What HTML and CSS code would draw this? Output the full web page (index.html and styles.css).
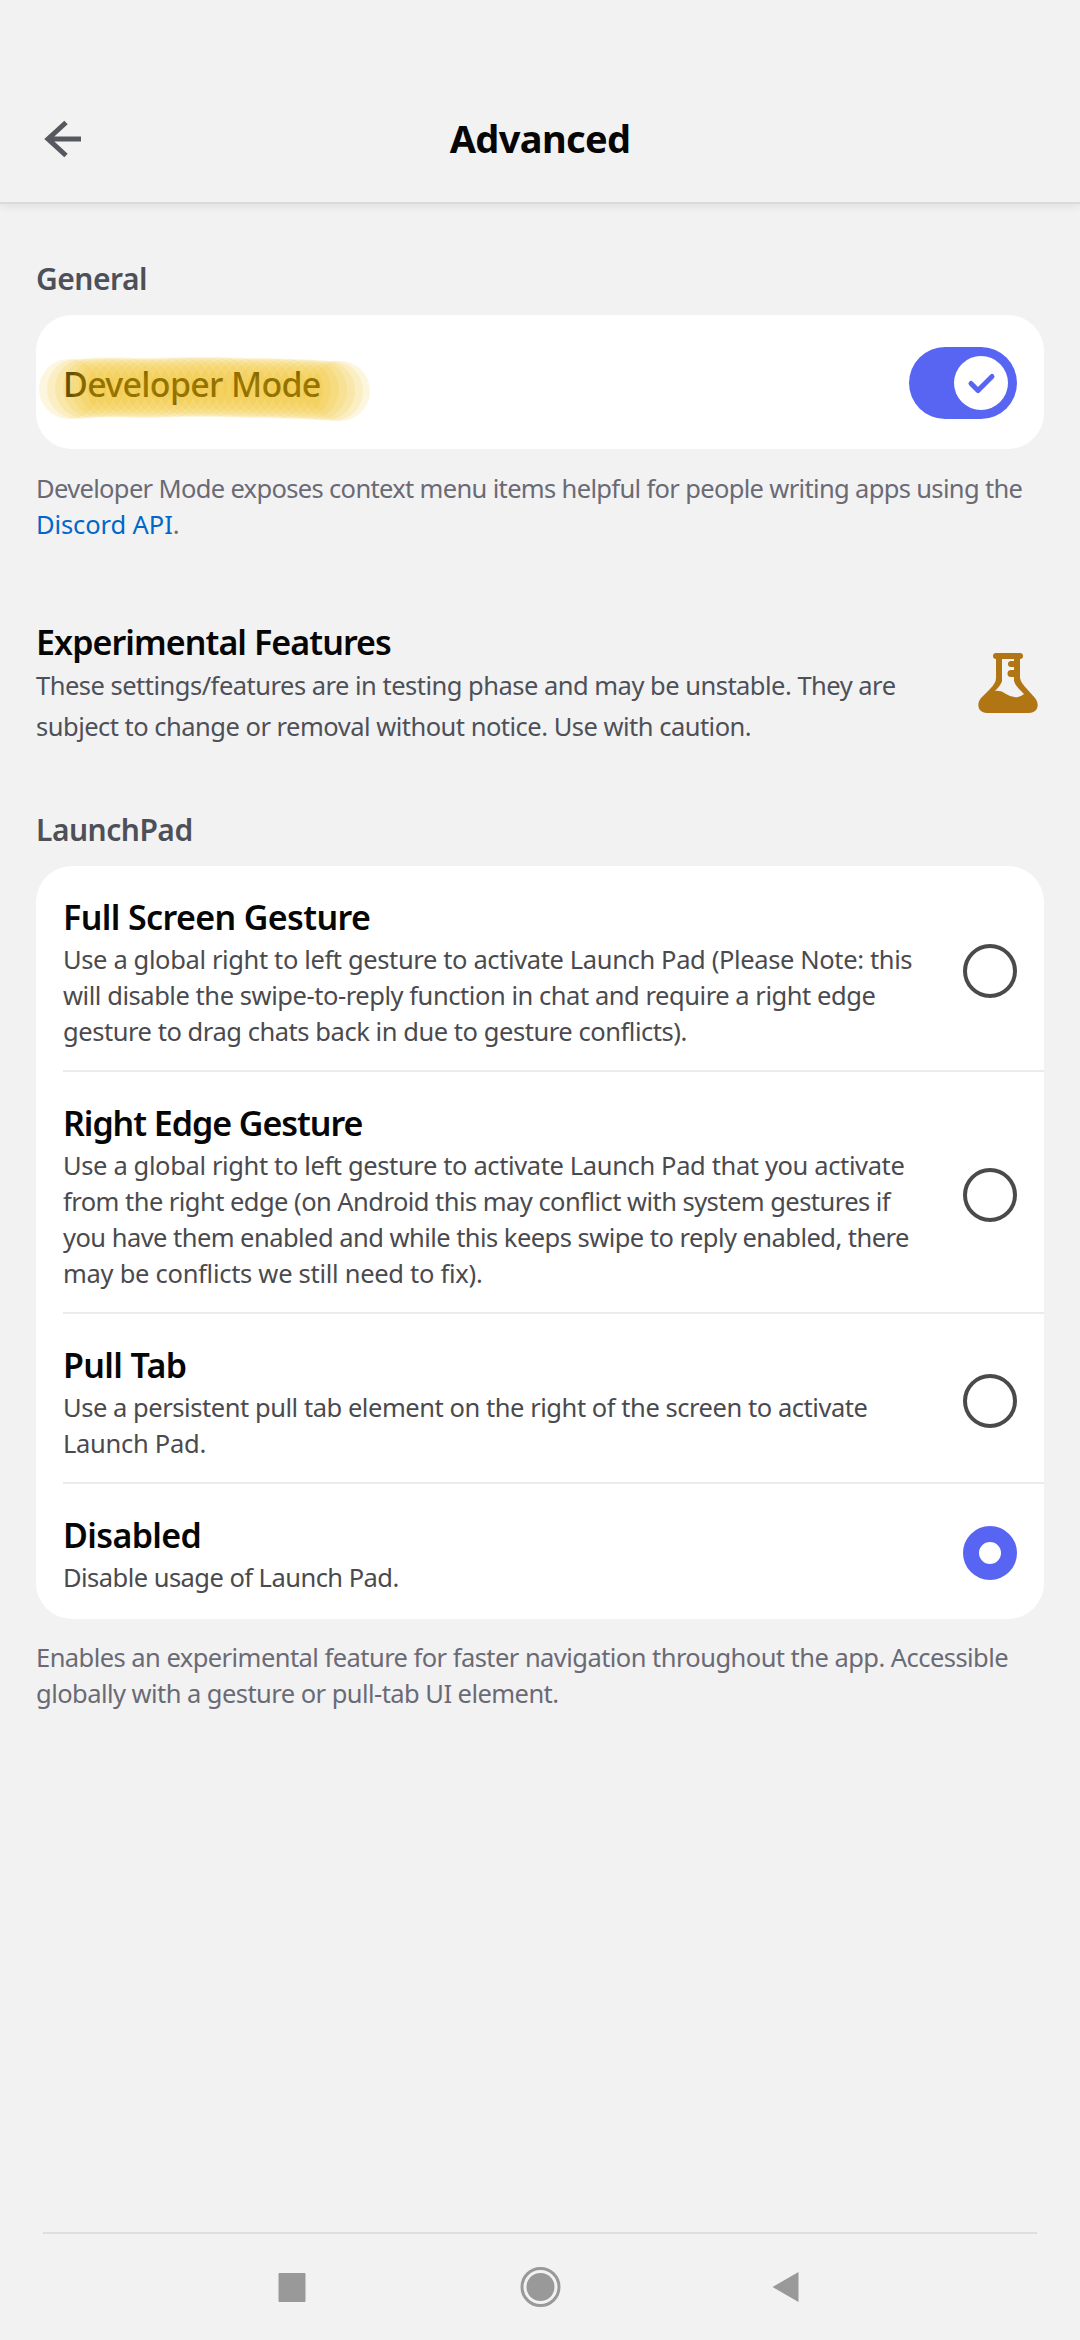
FILE: index.html
```html
<!DOCTYPE html>
<html lang="en">
<head>
<meta charset="utf-8">
<title>Advanced</title>
<link rel="stylesheet" href="styles.css">
</head>
<body>
<header class="header">
  <svg class="back" width="54" height="54" viewBox="0 0 54 54" fill="none" stroke="#565860" stroke-width="5"><path d="M30 10.500L12 27L30 43.500M12 27H45"/></svg>
  <h1 class="header-title">Advanced</h1>
</header>
<main class="content">
  <h2 class="section-title">General</h2>
  <section class="card switch-row">
    <div class="switch-label">Developer Mode
      <svg class="marker" width="342" height="72" viewBox="34 352 342 72" fill="#ecba00" fill-opacity=".125">
        <circle cx="69" cy="389" r="30"/><circle cx="77" cy="389" r="30"/><circle cx="85" cy="388.500" r="30"/><circle cx="93" cy="388" r="30"/><circle cx="101" cy="387.500" r="30"/><circle cx="109" cy="387.500" r="30"/><circle cx="117" cy="387.500" r="30"/><circle cx="125" cy="387.500" r="30"/><circle cx="133" cy="388" r="30"/><circle cx="141" cy="388" r="30"/><circle cx="149" cy="388" r="30"/><circle cx="157" cy="388" r="30"/><circle cx="165" cy="387.500" r="30"/><circle cx="173" cy="387.500" r="30"/><circle cx="181" cy="387" r="30"/><circle cx="189" cy="387" r="30"/><circle cx="197" cy="387" r="30"/><circle cx="205" cy="387" r="30"/><circle cx="213" cy="387" r="30"/><circle cx="221" cy="387" r="30"/><circle cx="229" cy="387.500" r="30"/><circle cx="237" cy="387.500" r="30"/><circle cx="245" cy="388" r="30"/><circle cx="253" cy="388" r="30"/><circle cx="261" cy="388" r="30"/><circle cx="269" cy="388" r="30"/><circle cx="277" cy="388.500" r="30"/><circle cx="285" cy="388.500" r="30"/><circle cx="293" cy="389" r="30"/><circle cx="301" cy="389" r="30"/><circle cx="309" cy="389.500" r="30"/><circle cx="317" cy="390" r="30"/><circle cx="325" cy="390.500" r="30"/><circle cx="333" cy="391" r="30"/><circle cx="340" cy="391" r="30"/>
      </svg>
    </div>
    <div class="switch"><div class="knob"><svg width="54" height="54" viewBox="0 0 54 54" fill="none" stroke="#5865f2" stroke-width="5" stroke-linecap="round" stroke-linejoin="round"><path d="M17 27.500L24 34.500L38 20.500"/></svg></div></div>
  </section>
  <p class="note note-tight">Developer Mode exposes context menu items helpful for people writing apps using the<br><a class="link">Discord API</a>.</p>

  <section class="experimental">
    <div>
      <h2 class="title title-short">Experimental Features</h2>
      <p class="experimental-text">These settings/features are in testing phase and may be unstable. They are<br>subject to change or removal without notice. Use with caution.</p>
    </div>
    <svg class="flask" width="60" height="60" viewBox="0 0 60 60"><path fill="#b27514" fill-rule="evenodd" d="M18 0H42A3 3 0 0 1 42 6V25Q43 30 49 36L57 45C62 51 60 60 51 60H9C0 60-2 51 3 45L12 36Q18 30 18 25V6A3 3 0 0 1 18 0ZM24 6V28Q23 32 17 38Q23 37 28 41Q34 45 40 44Q44 43 46 41Q37 33 36 28V24H33A3 3 0 0 1 33 17H36V14H33A3 3 0 0 1 33 8H36V6Z"/></svg>
  </section>

  <h2 class="section-title">LaunchPad</h2>
  <section class="card options">
    <div class="option">
      <div class="option-text"><h3 class="title">Full Screen Gesture</h3><p><span class="wide">Use a global right to left gesture to activate Launch Pad (Please Note: this</span><br><span class="medium">will disable the swipe-to-reply function in chat and require a right edge<br>gesture to drag chats back in due to gesture conflicts).</span></p></div>
      <span class="radio"></span>
    </div>
    <div class="option">
      <div class="option-text"><h3 class="title title-narrow">Right Edge Gesture</h3><p><span class="wide">Use a global right to left gesture to activate Launch Pad that you activate</span><br>from the right edge (on Android this may conflict with system gestures if<br>you have them enabled and while this keeps swipe to reply enabled, there<br><span class="widest">may be conflicts we still need to fix).</span></p></div>
      <span class="radio"></span>
    </div>
    <div class="option">
      <div class="option-text"><h3 class="title">Pull Tab</h3><p><span class="medium">Use a persistent pull tab element on the right of the screen to activate</span><br><span class="widest">Launch Pad.</span></p></div>
      <span class="radio"></span>
    </div>
    <div class="option">
      <div class="option-text"><h3 class="title">Disabled</h3><p>Disable usage of Launch Pad.</p></div>
      <span class="radio radio-on"></span>
    </div>
  </section>
  <p class="note">Enables an experimental feature for faster navigation throughout the app. Accessible<br>globally with a gesture or pull-tab UI element.</p>
</main>
<nav class="navbar">
  <svg width="40" height="44" viewBox="0 0 40 44"><rect x="6.500" y="8" width="27" height="29" rx="1" fill="#999"/></svg>
  <svg width="44" height="44" viewBox="0 0 44 44"><circle cx="22.500" cy="22" r="18.500" fill="none" stroke="#999" stroke-width="3"/><circle cx="22.500" cy="22" r="14" fill="#999"/></svg>
  <svg width="40" height="44" viewBox="0 0 40 44"><path d="M3.500 22L29.500 7V37Z" fill="#999"/></svg>
</nav>
</body>
</html>
```
FILE: styles.css
```css
* { box-sizing: border-box; }
body {
  margin: 0;
  min-height: 2340px;
  display: flex;
  flex-direction: column;
  background: #f2f2f3;
  color: #060607;
  font-family: "Noto Sans", sans-serif;
}
h1, h2, h3, p { margin: 0; }

.header {
  height: 204px;
  padding: 112px 36px 0;
  display: grid;
  grid-template-columns: 54px 1fr 54px;
  align-items: start;
  border-bottom: 2px solid #dadadb;
  box-shadow: 0 3px 8px rgba(0, 0, 0, .07);
}
.header-title {
  font-size: 38px;
  line-height: 52px;
  font-weight: 700;
  letter-spacing: -.65px;
  text-align: center;
}

.content { padding: 55px 36px 0; }
.section-title {
  margin-bottom: 16px;
  font-size: 30px;
  line-height: 40px;
  font-weight: 600;
  letter-spacing: -.5px;
  color: #4e5058;
}
.card { background: #fff; border-radius: 36px; }

.switch-row {
  height: 134px;
  padding: 2px 27px 0;
  display: flex;
  align-items: center;
  justify-content: space-between;
}
.switch-label {
  position: relative;
  padding-top: 1px;
  font-size: 34px;
  line-height: 46px;
  font-weight: 500;
  letter-spacing: -.7px;
  color: #060607;
}
.marker { position: absolute; left: -29px; top: -8px; }
.switch {
  width: 108px;
  height: 72px;
  padding: 9px;
  display: flex;
  justify-content: flex-end;
  border-radius: 36px;
  background: #5865f2;
}
.knob { width: 54px; height: 54px; border-radius: 50%; background: #fff; }

.note {
  margin-top: 20px;
  font-size: 25.5px;
  line-height: 36px;
  letter-spacing: -.55px;
  color: #6a6a75;
  white-space: nowrap;
}
.note-tight { margin-top: 21px; letter-spacing: -.66px; }
.link { color: #0068c8; letter-spacing: -.1px; }

.experimental {
  margin: 77px 0 63px;
  padding-right: 6px;
  display: flex;
  justify-content: space-between;
  align-items: center;
}
.title {
  font-size: 34px;
  line-height: 48px;
  font-weight: 600;
  letter-spacing: -.62px;
}
.title-short { line-height: 46px; letter-spacing: -.92px; }
.title-narrow { letter-spacing: -1.05px; }
.experimental-text {
  font-size: 25.5px;
  line-height: 41px;
  letter-spacing: -.51px;
  color: #4e5058;
  white-space: nowrap;
}

.options { padding-left: 27px; }
.option {
  padding: 27px 27px 21px 0;
  display: flex;
  align-items: center;
  justify-content: space-between;
  border-bottom: 2px solid #ebebed;
}
.option:last-child { border-bottom: 0; padding-bottom: 24px; }
.option-text {
  font-size: 25.5px;
  line-height: 36px;
  letter-spacing: -.54px;
  color: #4a4a4e;
  white-space: nowrap;
}
.medium { letter-spacing: -.45px; }
.wide { letter-spacing: -.37px; }
.widest { letter-spacing: -.28px; }
.option-text .title { color: #060607; }
.radio {
  width: 54px;
  height: 54px;
  margin-top: -1px;
  border: 4.5px solid #4a4a4d;
  border-radius: 50%;
}
.radio-on { border: 16px solid #5865f2; }

.navbar {
  height: 108px;
  margin: auto 43px 0;
  padding: 0 202px;
  display: grid;
  grid-template-columns: 93px 1fr 93px;
  align-items: center;
  justify-items: center;
  border-top: 2px solid #dedede;
}
```
